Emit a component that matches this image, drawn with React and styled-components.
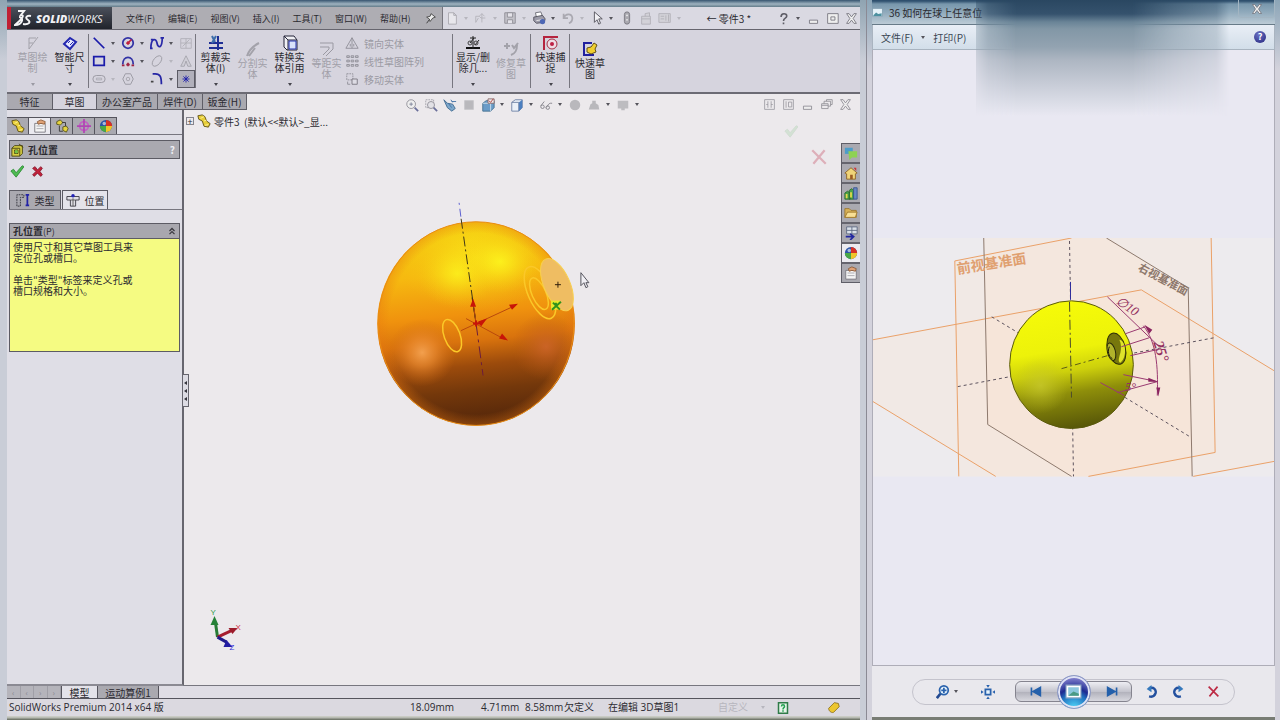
import React from 'react'
import styled, { createGlobalStyle } from 'styled-components'

const Global = createGlobalStyle`
   * {
      box-sizing: border-box;
   }
   body {
      margin: 0;
      background: #c9c8d2;
      color: #2b2a30;
      font-family: "Noto Sans CJK SC", "Noto Sans", sans-serif;
      font-size: 10px;
      line-height: 11px;
   }
   button {
      font: inherit;
      color: inherit;
      border: 0;
      padding: 0;
      background: none;
   }
`

// Drawings on a 16 x 16 grid
const glyphs = {
   pin: <><path d="M8 3l5 4-3 1-3 4-1-3-3-2 4-1z" fill="#eee" stroke="#444" /><path d="M6 10l-3 4" stroke="#333" /></>,
   page: <path d="M4 2h6l3 3v10H4zM10 2v3h3" fill="#e8e7ec" stroke="#a9a8af" />,
   open: <path d="M2 13V6h4l2 2h5M2 13l3-5M9 13V3l-3 3M9 3l3 3" fill="none" stroke="#b3b2b9" />,
   save: <><path d="M2 2h12v12H2z" fill="#c3c2c9" stroke="#8d8c94" /><path d="M5 2h6v5H5zM5 14v-4h6v4" fill="#e4e3e9" stroke="#8d8c94" /></>,
   print: <><path d="M5 7l-1-5 6-1 2 5" fill="#fff" stroke="#65656e" /><path d="M2 7l10-2 3 4-1 4-9 1-3-3z" fill="#9d9caa" stroke="#4d4c57" /><path d="M5 11l6-1" stroke="#eee" /><circle cx="12" cy="12" r="3" fill="#4d67b5" /></>,
   undo: <path d="M3 3v5h5M3 8c2-5 9-6 10 0 0 3-1 5-4 6" fill="none" stroke="#aaa9b1" strokeWidth="2" />,
   cursor: <path d="M5 1v12l3-3 2 5 2-1-2-5h4z" fill="#f2f1f5" stroke="#4e4d56" />,
   rebuild: <><rect x="5" y="1" width="6" height="14" rx="3" fill="#aaa9b0" stroke="#77767e" /><circle cx="8" cy="5" r="1" fill="#eee" /><circle cx="8" cy="10" r="1" fill="#eee" /></>,
   props: <path d="M3 6h10v9H3zM3 9h10M7 6V3l5-1v4" fill="#d3d2d8" stroke="#b1b0b7" />,
   settings: <path d="M1 3h13v10H1zM3 6h4M3 9h4M9 5v6M12 4v8" fill="#d3d2d8" stroke="#b1b0b7" />,
   help: <path d="M5 6c0-5 7-5 7-1 0 3-4 2-4 6M8 13v2" fill="none" stroke="#5f5e67" strokeWidth="2" />,
   min: <path d="M3 10h10v4H3z" fill="#eee" stroke="#6f6e77" />,
   max: <path d="M2 2h13v12H2zM6 6h5v4H6z" fill="#eee" stroke="#6f6e77" />,
   close: <path d="M2 2h3l3 4 3-4h3l-4 6 4 6h-3l-3-4-3 4H2l4-6z" fill="#eee" stroke="#6f6e77" />,
   paneL: <path d="M2 2h12v12H2zM6 4v8M10 4v8M4 8h2M10 8h2" fill="none" stroke="#85848c" />,
   paneR: <path d="M2 2h12v12H2zM5 4v8M8 5h4v6H8z" fill="none" stroke="#85848c" />,
   cascade: <path d="M2 7h8v6H2zM5 7V4h8v6h-3M2 9h8M8 4V2h7v6h-2" fill="none" stroke="#77767e" />,
   sketch: <path d="M4 14V3h7M4 14l3-4 6-8M4 8h4" fill="none" stroke="#a3a2aa" />,
   dim: <><path d="M2 9l6-6 6 4-6 7z" fill="#e6e8ff" stroke="#2327b0" strokeWidth="2" /><path d="M6 8l2-2M8 10l3-3" stroke="#2327b0" /></>,
   line: <path d="M2 2l12 12" stroke="#1b1baa" strokeWidth="2" />,
   circle: <><circle cx="8" cy="8" r="6" fill="none" stroke="#3232a5" strokeWidth="2" /><path d="M8 8l4-4M6 8h4M8 6v4" stroke="#c11d3c" strokeWidth="2" /></>,
   spline: <path d="M1 14C1 2 7 2 8 8s6 7 6-6M0 14h3M12 2h4M1 4h3" fill="none" stroke="#2828a8" strokeWidth="2" />,
   grid3: <path d="M2 3h12v11H2zM2 8h12M8 3v11M4 12l8-8" fill="none" stroke="#b0afb7" />,
   rect: <path d="M2 3h12v10H2z" fill="#d5d4df" stroke="#1b1baa" strokeWidth="2" />,
   arc: <><path d="M2 12c0-11 12-11 12 0" fill="none" stroke="#3232a5" strokeWidth="2" /><path d="M6 12h4M8 10v4M1 13h3M12 13h3" stroke="#a02242" strokeWidth="2" /></>,
   ellipse: <ellipse cx="8" cy="8" rx="7" ry="4" transform="rotate(-50 8 8)" fill="none" stroke="#9c9ba3" />,
   text: <path d="M2 14L8 2l6 12h-4L8 8l-2 6z" fill="#cfced6" stroke="#a3a2aa" />,
   slot: <><rect x="1" y="4" width="14" height="8" rx="4" fill="none" stroke="#96959e" /><path d="M5 7h6v2H5z" fill="none" stroke="#aaa9b2" /></>,
   hexagon: <><path d="M5 2h6l3 6-3 6H5L2 8z" fill="none" stroke="#96959e" /><circle cx="8" cy="8" r="2" fill="none" stroke="#a5a4ac" /></>,
   fillet: <><path d="M3 2h3c6 0 7 4 7 12" fill="none" stroke="#2525a4" strokeWidth="2" /><path d="M1 11h3" stroke="#444" strokeWidth="2" /></>,
   point: <path d="M8 4v8M4 8h8M5 5l6 6M11 5l-6 6" stroke="#1b1baa" />,
   trim: <><path d="M1 8h14M1 13h14M10 1v14" stroke="#1f2f95" strokeWidth="2" /><path d="M4 1l3 6M8 1L4 8" stroke="#3d6eab" strokeWidth="2" /></>,
   split: <path d="M2 15C4 9 8 5 14 2M4 15l6-8" fill="none" stroke="#a3a2aa" strokeWidth="2" />,
   convert: <><path d="M2 1h10l3 4v10H5l-3-3z" fill="#f1f1f5" stroke="#242438" /><path d="M2 1l4 4h9M6 5v10" fill="none" stroke="#242438" /><path d="M7 6h7v8H7z" fill="#d9e2fa" stroke="#2430ab" /></>,
   offset: <path d="M1 2h13v6l-7 7M1 6h9v2l-6 6" fill="none" stroke="#9a99a2" strokeWidth="1" />,
   mirror: <><path d="M8 2L1 14h14z" fill="none" stroke="#8d8c95" /><path d="M8 2v12M6 9v3M10 9v3" stroke="#8d8c95" /></>,
   array: <path d="M2 2h3v2H2zM7 2h3v2H7zM12 2h3v2h-3zM2 7h3v2H2zM7 7h3v2H7zM12 7h3v2h-3zM2 12h3v2H2zM7 12h3v2H7zM12 12h3v2h-3z" fill="#c7c6ce" stroke="#8f8e97" />,
   move: <><path d="M2 2h7v7H2z" fill="none" stroke="#8f8e97" strokeDasharray="2 1" /><path d="M8 8h6v6H8z" fill="#dddce4" stroke="#77767f" /><path d="M3 11v3h3" fill="none" stroke="#8f8e97" /></>,
   relations: <><path d="M1 13h14" stroke="#111" strokeWidth="2" /><path d="M8 1v13M5 3h6M5 8l4-5M10 10l4-5" stroke="#222" /><circle cx="5" cy="8" r="2" fill="none" stroke="#444" /><circle cx="11" cy="8" r="2" fill="none" stroke="#444" /></>,
   repair: <path d="M1 5h6M4 2v6M9 4l2 3 4-5M14 4c0 5-1 8-6 10" fill="none" stroke="#a3a2aa" strokeWidth="2" />,
   snap: <><path d="M1 15V2h14" fill="none" stroke="#b5243f" strokeWidth="2" /><circle cx="9" cy="9" r="5" fill="#eedce4" stroke="#a52d43" /><circle cx="9" cy="9" r="2" fill="#bd2044" /></>,
   rapid: <><path d="M10 2H2v12h10" fill="none" stroke="#20209f" strokeWidth="2" /><path d="M5 7l4-1 3-4 3 2-2 4 1 3-5 2-4-2z" fill="#f0cf30" stroke="#635219" /></>,
   zoomFit: <><circle cx="7" cy="7" r="5" fill="#eee" stroke="#8e8d96" /><path d="M5 7h4M7 5v4" stroke="#7a8098" /><path d="M11 11l4 4" stroke="#6a6f9a" strokeWidth="2" /></>,
   zoomArea: <><path d="M2 2h9v9H2z" fill="none" stroke="#a09fa8" strokeDasharray="2 1" /><circle cx="8" cy="8" r="4" fill="#e2e1e6" stroke="#8e8d96" /><path d="M11 11l4 4" stroke="#6a6f9a" strokeWidth="2" /></>,
   prev: <><path d="M1 2l4 4 6 1 3 5-4 3-5-4z" fill="#7da7cb" stroke="#40698f" /><path d="M6 6l4 5M9 2l2 3M10 4h5" stroke="#3f6fa5" /></>,
   section: <path d="M3 3h10v10H3z" fill="#b9b8bc" stroke="#c6c5c9" />,
   orient: <><path d="M2 6l4-3h9v8l-4 4H2z" fill="#6a9cc8" stroke="#46708f" /><path d="M2 6h9v9M11 6l4-3" fill="none" stroke="#d4e3ee" /><path d="M8 1h7v5H8z" fill="#eee" stroke="#866" /><path d="M9 3l2 2 3-4" fill="none" stroke="#a33" /></>,
   display: <><path d="M2 5l4-3h8v9l-4 4H2z" fill="#eaf0f8" stroke="#6b7fa2" /><path d="M10 5l4-3v9l-4 4z" fill="#4b7fc0" /><path d="M2 5h8v10" fill="none" stroke="#6b7fa2" /></>,
   hide: <><circle cx="4" cy="10" r="2" fill="none" stroke="#7f7e86" /><circle cx="10" cy="11" r="2" fill="none" stroke="#7f7e86" /><path d="M2 9l4-5M8 11c2-2 3-5 5-5h2" fill="none" stroke="#7f7e86" /></>,
   ball: <circle cx="8" cy="8" r="6" fill="#b9b8bc" />,
   scene: <path d="M2 13l2-6 2-1V3h4v3l3 2 1 5z" fill="#b9b8bc" />,
   screen: <path d="M2 3h12v9H2zM6 12h4v2H6z" fill="#bdbcc0" />,
   part: <><path d="M1 2l5-1 3 2 2 5 4 3-2 4-5-1-2-6-4-2z" fill="#e7ce38" stroke="#5b4d12" /><path d="M4 5l4-2M8 8l3-1M9 13l4-1" stroke="#fff19a" /></>,
   prop: <><path d="M2 5h12v10H2z" fill="#f5f5f5" stroke="#77767e" /><path d="M4 8h8M4 11h8" stroke="#a5a4aa" /><path d="M5 3l4-2 5 2-1 3-4-1-3 1z" fill="#dfa175" stroke="#8d5a38" /></>,
   config: <><path d="M2 3l4-2 3 3-3 3-4-1z" fill="#e5d33e" stroke="#555019" /><path d="M9 9l4-1 2 3-2 4-4-2z" fill="#e5d33e" stroke="#555019" /><path d="M5 8v6h4M8 4h4v4" fill="none" stroke="#333" /></>,
   dimx: <><circle cx="8" cy="8" r="5" fill="none" stroke="#c260c4" strokeWidth="2" /><path d="M8 0v16M0 8h16" stroke="#b145b4" strokeWidth="2" /></>,
   look: <><circle cx="8" cy="8" r="7" fill="#2b54a8" /><path d="M8 8V1a7 7 0 0 1 7 7z" fill="#d83224" /><path d="M8 8h7a7 7 0 0 1-7 7z" fill="#f0c52a" /><path d="M8 8v7a7 7 0 0 1-7-7z" fill="#49a846" /><circle cx="6" cy="5" r="2" fill="#fff" opacity=".6" /></>,
   hole: <><path d="M1 6l3-3h9v9l-3 3H1z" fill="#d8cf43" stroke="#46400e" /><path d="M1 6h9v9M4 8h4v4H4zM9 1l5 4" fill="none" stroke="#46400e" /><circle cx="6" cy="10" r="2" fill="#73c147" /></>,
   ok: <path d="M1 8l3-2 3 4 7-8 2 1-9 12z" fill="#4dbb51" stroke="#2f8c37" />,
   cancel: <path d="M2 4l3-2 3 4 4-4 2 2-3 4 3 4-2 2-4-4-4 4-2-2 4-4z" fill="#c1213a" stroke="#83142a" />,
   type: <><path d="M1 15V2h8v3H5v10z" fill="none" stroke="#2c2b35" strokeDasharray="2 1" /><path d="M13 3v10M11 2h4M11 14h4" stroke="#2222a5" strokeWidth="2" /></>,
   place: <><path d="M1 4h14v4h-4v7H5V8H1z" fill="#dfdee5" stroke="#37363f" /><path d="M5 8h6M8 6v9" stroke="#555" /><circle cx="8" cy="3" r="2" fill="#2222b5" /></>,
   chevrons: <path d="M4 8l4-4 4 4M4 13l4-4 4 4" fill="none" stroke="#3a3940" strokeWidth="2" />,
   forum: <><path d="M1 2h9v7H1z" fill="#4d9dc9" /><path d="M5 6h10v7H9l-3 3z" fill="#8ed253" /></>,
   home: <><path d="M1 8l7-6 7 6-2 1v6H3V9z" fill="#f0d478" stroke="#8a6126" /><path d="M7 10h3v5H7z" fill="#9b5b24" /><path d="M11 2h3v4" fill="#c33" /></>,
   library: <><path d="M1 8l3-2 3 2v7H1zM6 5l3-2 2 2v10H6z" fill="#4da24b" stroke="#286c2b" /><path d="M11 2h4v13h-4z" fill="#6987c2" stroke="#36558e" /><path d="M3 9v5M8 7v6" stroke="#e5da4c" strokeWidth="2" /></>,
   folder: <><path d="M1 13V3h5l2 2h6v8z" fill="#d9b257" stroke="#9c762a" /><path d="M1 13l3-6h11l-2 6z" fill="#f8df94" stroke="#9c762a" /></>,
   palette: <><path d="M3 1h12v8H3z" fill="#dae0e8" stroke="#5c6780" /><path d="M3 5h12M9 1v8" stroke="#5c6780" /><path d="M2 12h8M7 9l4 3-4 4" fill="none" stroke="#2328a0" strokeWidth="2" /></>,
   viewer: <><rect x="1" y="2" width="14" height="12" fill="#e4f1f8" stroke="#7c99ab" /><path d="M2 12l4-4 3 2 5-1v4H2z" fill="#4c90a0" /></>,
   magnify: <><circle cx="9" cy="6" r="5" fill="#e6f3fc" stroke="#2a62ad" strokeWidth="2" /><path d="M6 6h6M9 3v6" stroke="#2a62ad" strokeWidth="2" /><path d="M5 10l-4 5" stroke="#224991" strokeWidth="3" /></>,
   actual: <><path d="M5 5h6v6H5z" fill="#e6f3fc" stroke="#2a62ad" strokeWidth="2" /><path d="M6 0h4L8 3zM6 16h4l-2-3zM0 6v4l3-2zM16 6v4l-3-2z" fill="#2a62ad" /></>,
   first: <path d="M3 3v10M14 3L5 8l9 5z" fill="#2460ab" stroke="#2460ab" strokeWidth="2" />,
   next: <path d="M13 3v10M2 3l9 5-9 5z" fill="#2460ab" stroke="#2460ab" strokeWidth="2" />,
   ccw: <><path d="M5 4c6-2 9 2 8 6-1 3-4 5-8 4" fill="none" stroke="#23509f" strokeWidth="3" /><path d="M2 5l6-5v9z" fill="#3579bd" /></>,
   cw: <><path d="M11 4C5 2 2 6 3 10c1 3 4 5 8 4" fill="none" stroke="#23509f" strokeWidth="3" /><path d="M14 5L8 0v9z" fill="#3579bd" /></>,
   del: <path d="M2 2l12 12M13 2L3 14" stroke="#bd2b45" strokeWidth="2" />,
   shot: <><path d="M1 2h14v12H1z" fill="#fff" stroke="#8fa9c4" /><path d="M3 4h10v8H3z" fill="#8cc7dd" /><path d="M3 12l5-4 5 2v2z" fill="#4b9a84" /></>,
   quick: <><path d="M2 1h12v14H2z" fill="#e6f4e9" stroke="#2f7b48" strokeWidth="2" /><path d="M6 6c0-3 4-3 4 0 0 2-2 1-2 4M8 11v2" fill="none" stroke="#22a052" strokeWidth="2" /></>,
   tag: <path d="M2 9l7-7 5 1 1 4-7 7c-3 1-6-2-6-5z" fill="#ecc62f" stroke="#886a14" />,
}

const Svg = styled.svg`
   display: block;
   flex: none;
   width: ${p => p.$size || 14}px;
   height: ${p => p.$size || 14}px;
   opacity: ${p => p.$fade || 1};
`
const Icon = ({ name, size, fade }) => (
   <Svg viewBox="0 0 16 16" fill="none" aria-hidden="true" $size={size} $fade={fade}>
      {glyphs[name]}
   </Svg>
)

const Desktop = styled.div`
   display: grid;
   grid-template-columns: minmax(0, 866fr) minmax(0, 414fr);
   min-height: 100vh;
   background: linear-gradient(#3d5c77 2px, #c5c4cf 60px);
`

/* ---------- modelling window ---------- */

const Cad = styled.section`
   display: flex;
   flex-direction: column;
   min-width: 0;
   border: solid #c9ced7;
   border-width: 0 6px 0 7px;
   border-image: linear-gradient(#8ea3b1, #c9cdd7 60px) 1;
   box-shadow: inset 1px 0 #777783, 1px 0 #8b8a95;
`
const Frame = styled.div`
   height: ${p => p.$h}px;
   flex: none;
   background: ${p => p.$bg};
`
const TitleBar = styled.header`
   display: flex;
   align-items: stretch;
   height: 23px;
   background: #dad9e2;
   border-bottom: 1px solid #66656e;
`
const Brand = styled.div`
   display: flex;
   align-items: center;
   gap: 4px;
   width: 105px;
   padding-left: 3px;
   border-left: 4px solid #c02034;
   background: linear-gradient(#4b505b, #20232b);
   color: #f1f1f4;
   font: italic 11px "Open Sans", sans-serif;
   b {
      font-weight: 800;
   }
`
const Menus = styled.nav`
   display: flex;
   align-items: center;
   gap: 13px;
   padding: 0 4px 0 14px;
   background: #aeadb3;
   border-right: 1px solid #77767e;
   font-size: 9px;
   white-space: nowrap;
`
const QuickTools = styled.div`
   display: flex;
   align-items: center;
   padding-left: 1px;
`
const Tool = styled.button`
   display: grid;
   place-items: center;
   flex: none;
   width: ${p => p.$w || 16}px;
   height: ${p => p.$h || 16}px;
`
const Arrow = styled.button`
   display: grid;
   place-items: center;
   flex: none;
   width: ${p => p.$w || 13}px;
   height: 12px;
   &::after {
      content: "";
      border: 2px solid transparent;
      border-top: 3px solid ${p => (p.$dim ? '#b7b6be' : '#55545c')};
      border-bottom: 0;
   }
`
const DocName = styled.span`
   flex: 1;
   align-self: center;
   text-align: center;
   white-space: nowrap;
`
const WinButtons = styled.div`
   display: flex;
   align-items: center;
   gap: 3px;
   padding-right: 1px;
`

const Ribbon = styled.div`
   display: flex;
   height: 64px;
   padding: 4px 0 0 7px;
   background: #d6d4de;
   border-bottom: 2px solid #6c6b74;
`
const Divider = styled.i`
   width: 1px;
   height: 54px;
   margin-right: 1px;
   background: #77767f;
`
const Big = styled.button`
   display: flex;
   flex-direction: column;
   align-items: center;
   flex: none;
   width: ${p => p.$w || 37}px;
   height: 54px;
   padding-top: ${p => (p.$low ? 7 : 1)}px;
   color: ${p => (p.disabled ? '#a09fa8' : '#2b2a30')};
   span {
      width: ${p => (p.$wide ? 36 : 32)}px;
      font-size: 10px;
      line-height: 11px;
      word-break: break-all;
   }
   &::after {
      content: "";
      display: ${p => (p.$low ? 'none' : 'block')};
      margin-top: auto;
      margin-bottom: 2px;
      border: 2px solid transparent;
      border-top: 3px solid ${p => (p.disabled ? '#9b9aa3' : '#45444c')};
      border-bottom: 0;
   }
`
const Palette = styled.div`
   display: grid;
   grid-template-columns: 16px 13px 16px 13px 16px 13px 18px;
   grid-template-rows: repeat(3, 18px);
   align-items: center;
`
const Cell = styled(Tool)`
   width: 18px;
   height: 18px;
   background: ${p => (p.$on ? '#b1b0bb' : 'none')};
   border: 1px solid ${p => (p.$on ? '#5b5a64' : 'transparent')};
`
const SideList = styled.div`
   display: flex;
   flex-direction: column;
   width: 107px;
`
const SideItem = styled.button`
   display: flex;
   align-items: center;
   gap: 5px;
   height: 18px;
   color: #9b9aa3;
   white-space: nowrap;
`

const Work = styled.div`
   display: grid;
   flex: 1;
   grid-template-columns: 177px minmax(0, 1fr);
   grid-template-rows: 16px 1fr;
   background: #ece9ec;
`
const RibbonTabs = styled.div`
   display: flex;
   grid-area: 1 / 1;
   z-index: 1;
   width: max-content;
   border-bottom: 1px solid #5f5e67;
`
const RibbonTab = styled.button`
   width: ${p => p.$w}px;
   height: 15px;
   border-right: 1px solid #5f5e67;
   background: ${p => (p.$on ? '#d6d4de' : '#aaa9b0')};
   white-space: nowrap;
`
const Side = styled.aside`
   grid-area: 2 / 1;
   padding-top: 7px;
   background: #dfdee6;
   border-right: 2px solid #67666f;
   border-bottom: 2px solid #8b8a93;
`
const SideTabs = styled.div`
   display: flex;
   border-bottom: 1px solid #77767f;
`
const SideTab = styled.button`
   display: grid;
   place-items: center;
   width: 22px;
   height: 17px;
   border: solid #55545d;
   border-width: 1px 1px 0 0;
   background: ${p => (p.$on ? '#ebeaf0' : '#aaa9b0')};
`
const SideBody = styled.div`
   padding: 5px 2px;
`
const Heading = styled.h2`
   display: flex;
   align-items: center;
   gap: 3px;
   height: 19px;
   margin: 0;
   padding: 0 4px 0 1px;
   background: #aaa9b0;
   border: 1px solid #5c5b64;
   font-size: 10px;
   span:last-child {
      margin-left: auto;
      color: #eeedf2;
   }
`
const Confirm = styled.div`
   display: flex;
   gap: 4px;
   height: 31px;
   padding-top: 4px;
`
const ModeTabs = styled.div`
   display: flex;
   gap: 1px;
   margin-right: -2px;
   border-bottom: 1px solid #77767f;
`
const ModeTab = styled.button`
   display: flex;
   align-items: center;
   justify-content: center;
   gap: 5px;
   width: ${p => (p.$on ? 46 : 52)}px;
   height: 19px;
   margin-bottom: ${p => (p.$on ? -1 : 0)}px;
   border: 1px solid #5c5b64;
   border-bottom: 0;
   background: ${p => (p.$on ? '#e4e3ea' : '#aaa9b0')};
`
const Group = styled.section`
   margin-top: 13px;
   border: 1px solid #5c5b64;
   h3 {
      display: flex;
      align-items: center;
      justify-content: space-between;
      height: 15px;
      margin: 0;
      padding: 0 2px 0 3px;
      background: #a8a7ae;
      border-bottom: 1px solid #5c5b64;
      font-size: 10px;
   }
   h3 small {
      font-size: 9px;
      font-weight: 400;
   }
`
const Note = styled.p`
   height: 112px;
   margin: 0;
   padding: 2px 3px;
   background: #f5fb82;
   white-space: pre-line;
`

const View = styled.main`
   position: relative;
   display: flex;
   flex-direction: column;
   grid-area: 1 / 2 / 3 / 3;
   min-width: 0;
   border-bottom: 1px solid #77767f;
`
const Scene = styled.svg`
   position: absolute;
   inset: 0;
   width: 100%;
   height: 100%;
`
const HeadsUp = styled.div`
   display: grid;
   grid-template-columns: 1fr auto 1fr;
   align-items: center;
   height: 20px;
   padding-top: 1px;
   z-index: 1;
`
const Row = styled.div`
   display: flex;
   align-items: center;
   justify-content: ${p => p.$justify || 'flex-start'};
   padding-right: ${p => p.$pad || 0}px;
`
const Tree = styled.div`
   display: flex;
   align-items: center;
   gap: 3px;
   padding-left: 2px;
   white-space: pre;
   z-index: 1;
`
const Expand = styled.button`
   width: 8px;
   height: 8px;
   border: 1px solid #85848d;
   font-size: 9px;
   line-height: 5px;
`
const Corner = styled.div`
   position: absolute;
   top: 29px;
   right: 34px;
   display: flex;
   flex-direction: column;
   gap: 9px;
   width: 43px;
   button:last-child {
      align-self: flex-end;
   }
`
const TaskPane = styled.div`
   position: absolute;
   top: 49px;
   right: 0;
   border: 1px solid #5f5e67;
   border-right: 0;
`
const Task = styled.button`
   display: grid;
   place-items: center;
   width: 18px;
   height: 20px;
   background: ${p => (p.$on ? '#ecebf0' : '#aaa9b0')};
   & + & {
      border-top: 2px solid #66656e;
   }
   &:first-child {
      height: 18px;
   }
`
const Handle = styled.button`
   position: absolute;
   top: 280px;
   left: -2px;
   z-index: 2;
   display: grid;
   align-content: center;
   justify-items: center;
   gap: 4px;
   width: 7px;
   height: 33px;
   background: #dcdbe3;
   border: 1px solid #66656e;
   i {
      border: 2px solid transparent;
      border-right: 3px solid #33323a;
      border-left: 0;
   }
`

const Sheets = styled.div`
   display: flex;
   height: 13px;
   background: #dfdde5;
   border-bottom: 1px solid #55545d;
`
const Sheet = styled.button`
   width: ${p => p.$w}px;
   overflow: hidden;
   border-right: 1px solid #55545d;
   background: ${p => (p.$on ? '#e3e2e9' : '#aaa9b0')};
   white-space: nowrap;
`
const Pager = styled.div`
   display: flex;
   width: 55px;
   background: #b5b4bb;
   border-right: 1px solid #55545d;
   button {
      flex: 1;
      border-right: 1px solid #a09fa7;
      color: #85848d;
      font-size: 8px;
   }
`
const Status = styled.footer`
   display: flex;
   align-items: center;
   height: 17px;
   padding-left: 2px;
   background: #dbd9e0;
   font-family: "Open Sans", "Noto Sans CJK SC", sans-serif;
   white-space: nowrap;
`
const Stat = styled.span`
   flex: ${p => (p.$w ? 'none' : 1)};
   width: ${p => (p.$w ? p.$w + 'px' : 'auto')};
   color: ${p => (p.$dim ? '#b7b6be' : 'inherit')};
`

/* ---------- photo viewer window ---------- */

const Viewer = styled.section`
   position: relative;
   display: flex;
   flex-direction: column;
   min-width: 0;
   margin-left: 1px;
   border: solid #d6d5de;
   border-width: 0 5px;
   border-image: linear-gradient(#8ba5b7, #d3d2dc 70px) 1;
   box-shadow: inset 1px 0 #85848f;
`
const ViewerTitle = styled.header`
   display: flex;
   align-items: center;
   gap: 6px;
   height: 25px;
   background: linear-gradient(#2f506e 1px, #7897ac 4px, #8fa9bb 12px, #bccbd6);
   border-bottom: 1px solid #677a88;
   white-space: nowrap;
`
const CloseX = styled.button`
   display: grid;
   place-items: center;
   align-self: flex-start;
   width: 37px;
   height: 18px;
   margin-left: auto;
   border: 1px solid #a3b5c2;
   border-top: 0;
   border-radius: 0 0 4px 4px;
`
const ViewerMenu = styled.nav`
   display: flex;
   align-items: center;
   height: 25px;
   padding: 0 8px;
   background: linear-gradient(#e9eef6, #d2dee9);
   border: solid #a9b4c0;
   border-width: 0 1px 1px;
   color: #3a4654;
`
const HelpDot = styled.button`
   width: 12px;
   height: 12px;
   margin-left: auto;
   border-radius: 50%;
   background: radial-gradient(circle at 40% 30%, #6a72c4, #24247c);
   color: #fff;
   font-size: 9px;
   font-weight: 700;
   line-height: 12px;
`
// Smear falling from the title bar down over the menu and the page
const Smear = styled.div`
   position: absolute;
   top: 0;
   left: 104px;
   right: 46px;
   height: 116px;
   background: linear-gradient(#2a4761, #35526d 14px, #6a8497 22px, #8297a6 29px, #93a3b1 47px, #adb6c2 60px, #c5cad5 82px, #dcdee8 104px, #e9e8f2);
   mask-image: linear-gradient(to right, #0006, #000b 12px, #000 40px, #000 62%, #000a 78%, #0006 95%, transparent);
`
const Stage = styled.div`
   display: flex;
   align-items: center;
   flex: 1;
   background: #e9e8f2;
   border: solid #aeadb8;
   border-width: 0 1px 1px;
   svg {
      display: block;
      width: 100%;
   }
`
const Bar = styled.div`
   display: flex;
   justify-content: center;
   align-items: center;
   height: 51px;
   background: #e9e8ed;
`
const Pill = styled.div`
   display: flex;
   align-items: center;
   height: 26px;
   padding-left: 22px;
   border: 1px solid #c4c3cc;
   border-radius: 13px;
`
const Nav = styled.div`
   display: flex;
   align-items: center;
   justify-content: space-between;
   flex: none;
   width: 117px;
   height: 21px;
   margin-right: 6px;
   padding: 0 11px;
   border: 1px solid #85848f;
   border-radius: 6px;
   background: linear-gradient(#eeeef3, #c4c4cd 50%, #b0b0ba 51%, #d7d7de);
`
const Show = styled.button`
   display: grid;
   place-items: center;
   flex: none;
   width: 34px;
   height: 34px;
   border: 1px solid #8e9bc4;
   border-radius: 50%;
   background: radial-gradient(circle at 50% 100%, #4fd8f8, #2270c0 40%, #1d2a91 55%, #8583cf 85%);
   box-shadow: inset 0 0 0 2px #dfe3f4;
`

const menuItems = ['文件(F)', '编辑(E)', '视图(V)', '插入(I)', '工具(T)', '窗口(W)', '帮助(H)']

const quickTools = [
   ['page', 1], ['open', 1], ['save', 1], ['print', 0], ['undo', 1], ['cursor', 0],
]
const palette = [
   'line', '.', 'circle', '.', 'spline', '.', 'grid3',
   'rect', '.', 'arc', '.', 'ellipse', ',', 'text',
   'slot', ',', 'hexagon', '', 'fillet', '.', 'point',
]
const headsUp = ['zoomFit', 'zoomArea', 'prev', 'section', 'orient', '.', 'display', '.', 'hide', '.', 'ball', 'scene', '.', 'screen', '.']
const tasks = ['forum', 'home', 'library', 'folder', 'palette', 'look', 'prop']

const note = `使用尺寸和其它草图工具来
定位孔或槽口。

单击"类型"标签来定义孔或
槽口规格和大小。`

const BigButton = ({ icon, label, ...rest }) => (
   <Big {...rest}>
      <Icon name={icon} size={16} />
      <span>{label}</span>
   </Big>
)

const Model = () => (
   <Scene viewBox="184 94 676 592" aria-hidden="true">
      <defs>
         <linearGradient id="body" x1="0.45" y1="0" x2="0.55" y2="1">
            <stop offset="0" stopColor="#f4cb10" />
            <stop offset=".25" stopColor="#f6b910" />
            <stop offset=".45" stopColor="#f0920e" />
            <stop offset=".58" stopColor="#d9730d" />
            <stop offset=".7" stopColor="#9c4b0c" />
            <stop offset=".82" stopColor="#74380b" />
            <stop offset="1" stopColor="#50240a" />
         </linearGradient>
         <radialGradient id="shine">
            <stop offset="0" stopColor="#fdf81e" />
            <stop offset=".3" stopColor="#fbec1a" stopOpacity=".75" />
            <stop offset="1" stopColor="#f5c810" stopOpacity="0" />
         </radialGradient>
         <radialGradient id="glow">
            <stop offset="0" stopColor="#f3a04e" />
            <stop offset=".4" stopColor="#ea8a30" stopOpacity=".7" />
            <stop offset="1" stopColor="#d06a10" stopOpacity="0" />
         </radialGradient>
         <radialGradient id="blush">
            <stop offset="0" stopColor="#cf652c" stopOpacity=".8" />
            <stop offset="1" stopColor="#b85a10" stopOpacity="0" />
         </radialGradient>
         <radialGradient id="rim">
            <stop offset=".88" stopColor="#e87810" stopOpacity="0" />
            <stop offset="1" stopColor="#e87810" stopOpacity=".4" />
         </radialGradient>
         <clipPath id="ball">
            <ellipse cx="476" cy="324" rx="99" ry="102" />
         </clipPath>
      </defs>
      <g clipPath="url(#ball)">
         <rect x="376" y="221" width="200" height="206" fill="url(#body)" />
         <ellipse cx="476" cy="258" rx="80" ry="56" fill="url(#shine)" opacity=".6" />
         <ellipse cx="457" cy="274" rx="40" ry="34" fill="url(#shine)" opacity=".7" />
         <ellipse cx="500" cy="262" rx="40" ry="32" fill="url(#shine)" opacity=".8" />
         <circle cx="422" cy="353" r="34" fill="url(#glow)" />
         <circle cx="546" cy="347" r="34" fill="url(#blush)" />
         <ellipse cx="476" cy="324" rx="99" ry="103" fill="url(#rim)" />
      </g>
      <ellipse cx="476" cy="324" rx="98" ry="102" fill="none" stroke="#e98d14" />
      <path d="M459 203l2 16" stroke="#5b5fd0" strokeDasharray="2 4 8 3" />
      <path d="M461 219l15 105" stroke="#403818" strokeDasharray="10 3 2 3" />
      <path d="M472 298l4 26" stroke="#4b3010" />
      <path d="M476 324l7 52" stroke="#6b1c3c" strokeDasharray="12 4 3 4" />
      <g stroke="#b9480c" strokeWidth="1">
         <path d="M461 331l54-25M466 319l39 21M476 324l-3-22" />
      </g>
      <g fill="#c81408">
         <path d="M518 304l-9 1 3 5zM508 341l-6-7-3 5zM473 299l-3 8h6zM487 319l-9 3 3 5z" />
         <path d="M473 324h7M476 321v6" stroke="#c81408" strokeWidth="2" />
      </g>
      <g fill="none" stroke="#fbc828" strokeWidth="1.5">
         <ellipse cx="452" cy="336" rx="8" ry="17" transform="rotate(-20 452 336)" />
         <ellipse cx="540" cy="293" rx="12" ry="28" transform="rotate(-24 540 293)" />
         <ellipse cx="539" cy="294" rx="7" ry="17" transform="rotate(-24 539 294)" />
      </g>
      <ellipse cx="557" cy="285" rx="13" ry="28" transform="rotate(-24 557 285)" fill="#efbd62" stroke="#f8cf4e" />
      <path d="M551 301h9v9h-9z" fill="#e8e82c" />
      <path d="M552 310l9-8M553 303l7 7M556 303v4" stroke="#31931c" strokeWidth="2" />
      <path d="M555 285h6M558 282v6" stroke="#33210c" />
      <path d="M581 273v13l3-3 2 5 2-1-2-4h3z" fill="#f0eff4" stroke="#55545d" />
      <g strokeWidth="3">
         <path d="M217 638l-2-14" stroke="#277c35" />
         <path d="M217 638l15-7" stroke="#a51d2e" />
         <path d="M217 638l9 5" stroke="#221c8a" />
      </g>
      <path d="M214 617l-4 9h8z" fill="#258137" />
      <path d="M237 629l-9 0 4 6z" fill="#9c1b2a" />
      <path d="M232 648l-9 0 3-7z" fill="#221ca2" />
      <g fontFamily="Liberation Sans" fontSize="8">
         <text x="210" y="616" fill="#35a04b">Y</text>
         <text x="235" y="631" fill="#d03348">X</text>
         <text x="229" y="651" fill="#3535dc">Z</text>
      </g>
   </Scene>
)

const Photo = () => (
   <svg viewBox="872 238 402 239" role="img" aria-label="球与基准面">
      <defs>
         <linearGradient id="lime" x1=".4" y1="0" x2=".55" y2="1">
            <stop offset="0" stopColor="#f6fb08" />
            <stop offset=".38" stopColor="#edf20a" />
            <stop offset=".55" stopColor="#cdd00c" />
            <stop offset=".72" stopColor="#8e8e0a" />
            <stop offset="1" stopColor="#565508" />
         </linearGradient>
         <radialGradient id="limeGlow">
            <stop offset="0" stopColor="#c9ca30" stopOpacity=".7" />
            <stop offset="1" stopColor="#c0c020" stopOpacity="0" />
         </radialGradient>
      </defs>
      <path d="M872 238h402v239H872z" fill="#edebee" />
      <g fill="#fde0c8" fillOpacity=".24">
         <path d="M954 261l117-23h140l4 215-127 24H958z" />
         <path d="M872 340l269-50 133 81v91l-81 15H995l-123-75z" />
         <path d="M983 238h123l82 50 4 189H1071l-84-52z" />
      </g>
      <g fill="none" stroke="#eaa168">
         <path d="M1071 238l-117 23 4 216M1211 238l4 215-127 24" />
         <path d="M872 340l269-50 133 81M872 402l123 75M1193 477l81-15" />
      </g>
      <path d="M983 238l4 187 84 52M1106 238l82 50 4 189" fill="none" stroke="#8d786c" />
      <g stroke="#5c525d" strokeDasharray="3 3">
         <path d="M1069 241l4 236M991 317l200 121M957 387l257-49" />
      </g>
      <ellipse cx="1071" cy="365" rx="62" ry="64" fill="url(#lime)" stroke="#59590c" />
      <circle cx="1040" cy="386" r="28" fill="url(#limeGlow)" />
      <path d="M1069 302l2 96" stroke="#4c4b2c" strokeDasharray="10 3 2 3" />
      <path d="M1070 282v18" stroke="#2f2d9c" />
      <path d="M1061 369l46-13" stroke="#5c5c18" strokeDasharray="6 3 2 3" />
      <ellipse cx="1116" cy="349" rx="9" ry="16" transform="rotate(-14 1116 349)" fill="#77770c" stroke="#2d2d08" />
      <path d="M1119 340c7 1 8 18 1 23-3-1-1-6 0-10s1-9-1-13z" fill="#dfe42a" />
      <ellipse cx="1111" cy="352" rx="4" ry="9" transform="rotate(-14 1111 352)" fill="#b1b32b" stroke="#29290a" />
      <path d="M1109 347c-2 4-1 10 3 12" stroke="#1e1e08" fill="none" />
      <g fill="none" stroke="#9a3a70">
         <path d="M1107 297l52 50M1125 334l20-7M1121 347l28-9M1130 356l31-7" />
         <path d="M1143 326c13 16 15 40 14 70M1123 375l34 7-40 11M1100 383l24 13" />
      </g>
      <path d="M1144 325l8 5-3 4zM1158 397l-2-9h4zM1158 382l-10-4v4z" fill="#8b2460" />
      <g fill="#93305f" fontFamily="Liberation Serif" fontStyle="italic">
         <text x="1115" y="303" fontSize="13" transform="rotate(35 1115 303)">∅10</text>
         <text x="1153" y="343" fontSize="15" fontWeight="700" transform="rotate(72 1153 343)">25°</text>
         <text x="1125" y="391" fontSize="12">5°</text>
      </g>
      <g fontFamily="Noto Sans CJK SC" fontWeight="700">
         <text x="957" y="274" fontSize="14" fill="#e0a070" transform="rotate(-9 957 274)">前视基准面</text>
         <text x="1137" y="270" fontSize="11" fill="#8d786c" transform="rotate(28 1137 270)">右视基准面</text>
      </g>
   </svg>
)

const App = () => {
   return (
      <Desktop>
         <Global />
         <Cad>
            <Frame $h={7} $bg="linear-gradient(#36546f, #9fb3c0 4px, #627b89)" />
            <TitleBar>
               <Brand>
                  <svg width="18" height="16" viewBox="0 0 18 16" fill="none" stroke="#f4f4f6" strokeWidth="2" aria-hidden="true">
                     <path d="M4 1h6L7 5c4 0 1 4-6 10 8 0 9-8 4-8M17 6c-5-1-6 2-3 4s1 5-5 4" />
                  </svg>
                  <span><b>SOLID</b>WORKS</span>
               </Brand>
               <Menus>
                  {menuItems.map(m => <button key={m}>{m}</button>)}
                  <Icon name="pin" />
               </Menus>
               <QuickTools>
                  {quickTools.map(([name, dim]) => (
                     <React.Fragment key={name}>
                        <Tool aria-label={name}><Icon name={name} /></Tool>
                        <Arrow $dim={dim} aria-label={name + ' menu'} />
                     </React.Fragment>
                  ))}
                  {['rebuild', 'props', 'settings'].map(n => (
                     <Tool key={n} $w={19} aria-label={n}><Icon name={n} /></Tool>
                  ))}
                  <Arrow $w={8} $dim aria-label="settings menu" />
               </QuickTools>
               <DocName>← 零件3 *</DocName>
               <WinButtons>
                  <Tool aria-label="help"><Icon name="help" size={13} /></Tool>
                  <Arrow $w={8} aria-label="help menu" />
                  <Tool aria-label="minimize"><Icon name="min" size={13} /></Tool>
                  <Tool aria-label="maximize"><Icon name="max" size={13} /></Tool>
                  <Tool aria-label="close"><Icon name="close" size={13} /></Tool>
               </WinButtons>
            </TitleBar>
            <Ribbon>
               <BigButton icon="sketch" label="草图绘制" disabled />
               <BigButton icon="dim" label="智能尺寸" />
               <Divider />
               <Palette>
                  {palette.map((n, i) => {
                     if (n === '.' || n === ',') return <Arrow key={i} $dim={n === ','} aria-label="more" />
                     if (n === '') return <span key={i} />
                     return (
                        <Cell key={i} $on={n === 'point'} aria-label={n}>
                           <Icon name={n} />
                        </Cell>
                     )
                  })}
               </Palette>
               <Divider />
               <BigButton icon="trim" label="剪裁实体(I)" />
               <BigButton icon="split" label="分割实体" $low disabled />
               <BigButton icon="convert" label="转换实体引用" />
               <BigButton icon="offset" label="等距实体" $low disabled />
               <SideList>
                  <SideItem><Icon name="mirror" />镜向实体</SideItem>
                  <SideItem><Icon name="array" />线性草图阵列</SideItem>
                  <SideItem><Icon name="move" />移动实体</SideItem>
               </SideList>
               <Divider />
               <BigButton icon="relations" label="显示/删除几..." $w={38} $wide />
               <BigButton icon="repair" label="修复草图" $low disabled $w={38} />
               <Divider />
               <BigButton icon="snap" label="快速捕捉" />
               <Divider />
               <BigButton icon="rapid" label="快速草图" $low $w={38} />
            </Ribbon>
            <Work>
               <RibbonTabs>
                  <RibbonTab $w={46}>特征</RibbonTab>
                  <RibbonTab $w={44} $on>草图</RibbonTab>
                  <RibbonTab $w={61}>办公室产品</RibbonTab>
                  <RibbonTab $w={45}>焊件(D)</RibbonTab>
                  <RibbonTab $w={44}>钣金(H)</RibbonTab>
               </RibbonTabs>
               <Side>
                  <SideTabs>
                     {['part', 'prop', 'config', 'dimx', 'look'].map(n => (
                        <SideTab key={n} $on={n === 'prop'} aria-label={n}><Icon name={n} /></SideTab>
                     ))}
                  </SideTabs>
                  <SideBody>
                     <Heading>
                        <Icon name="hole" />
                        <span>孔位置</span>
                        <span>?</span>
                     </Heading>
                     <Confirm>
                        <Tool aria-label="ok"><Icon name="ok" /></Tool>
                        <Tool aria-label="cancel"><Icon name="cancel" size={13} /></Tool>
                     </Confirm>
                     <ModeTabs>
                        <ModeTab><Icon name="type" />类型</ModeTab>
                        <ModeTab $on><Icon name="place" />位置</ModeTab>
                     </ModeTabs>
                     <Group>
                        <h3><span>孔位置<small>(P)</small></span><Icon name="chevrons" size={10} /></h3>
                        <Note>{note}</Note>
                     </Group>
                  </SideBody>
               </Side>
               <View>
                  <Model />
                  <HeadsUp>
                     <span />
                     <Row>
                        {headsUp.map((n, i) => n === '.'
                           ? <Arrow key={i} $w={10} aria-label="more" />
                           : <Tool key={i} $w={19} aria-label={n}><Icon name={n} /></Tool>)}
                     </Row>
                     <Row $justify="flex-end" $pad={5}>
                        {['paneL', 'paneR', 'min', 'cascade', 'close'].map(n => (
                           <Tool key={n} $w={19} aria-label={n}><Icon name={n} size={13} fade={0.8} /></Tool>
                        ))}
                     </Row>
                  </HeadsUp>
                  <Tree>
                     <Expand>+</Expand>
                     <Icon name="part" />
                     <span>{'零件3  (默认<<默认>_显...'}</span>
                  </Tree>
                  <Corner>
                     <Tool aria-label="accept"><Icon name="ok" fade={0.15} /></Tool>
                     <Tool aria-label="discard"><Icon name="del" size={18} fade={0.3} /></Tool>
                  </Corner>
                  <TaskPane>
                     {tasks.map(n => <Task key={n} $on={n === 'look'} aria-label={n}><Icon name={n} /></Task>)}
                  </TaskPane>
                  <Handle aria-label="collapse panel"><i /><i /><i /></Handle>
               </View>
            </Work>
            <Sheets>
               <Pager>
                  {['‹', '‹', '›', '›'].map((c, i) => <button key={i}>{c}</button>)}
               </Pager>
               <Sheet $w={36} $on>模型</Sheet>
               <Sheet $w={61}>运动算例1</Sheet>
            </Sheets>
            <Status>
               <Stat>SolidWorks Premium 2014 x64 版</Stat>
               <Stat $w={71}>18.09mm</Stat>
               <Stat $w={44}>4.71mm</Stat>
               <Stat $w={39}>8.58mm</Stat>
               <Stat $w={44}>欠定义</Stat>
               <Stat $w={110}>在编辑 3D草图1</Stat>
               <Stat $w={38} $dim>自定义</Stat>
               <Arrow $dim aria-label="units" />
               <Stat $w={8} />
               <Icon name="quick" size={12} />
               <Stat $w={38} />
               <Icon name="tag" size={13} />
               <Stat $w={20} />
            </Status>
            <Frame $h={4} $bg="linear-gradient(#c9cbc4 1px, #62695c)" />
         </Cad>
         <Viewer>
            <ViewerTitle>
               <Icon name="viewer" size={11} />
               <span>36 如何在球上任意位</span>
               <CloseX aria-label="close"><Icon name="close" size={12} /></CloseX>
            </ViewerTitle>
            <ViewerMenu>
               <button>文件(F)</button>
               <Arrow $w={20} aria-label="file menu" />
               <button>打印(P)</button>
               <HelpDot>?</HelpDot>
            </ViewerMenu>
            <Stage>
               <Photo />
            </Stage>
            <Bar>
               <Pill>
                  <Tool aria-label="zoom"><Icon name="magnify" /></Tool>
                  <Arrow $w={10} aria-label="zoom menu" />
                  <Tool $w={54} aria-label="actual size"><Icon name="actual" /></Tool>
                  <Nav>
                     <Tool aria-label="previous"><Icon name="first" size={13} /></Tool>
                     <Show aria-label="slide show"><Icon name="shot" size={17} /></Show>
                     <Tool aria-label="next"><Icon name="next" size={13} /></Tool>
                  </Nav>
                  <Tool $w={27} aria-label="rotate left"><Icon name="ccw" size={13} /></Tool>
                  <Tool $w={27} aria-label="rotate right"><Icon name="cw" size={13} /></Tool>
                  <Tool $w={42} aria-label="delete"><Icon name="del" size={13} /></Tool>
               </Pill>
            </Bar>
            <Frame $h={3} $bg="#787c74" />
            <Smear />
         </Viewer>
      </Desktop>
   )
}

export default App
